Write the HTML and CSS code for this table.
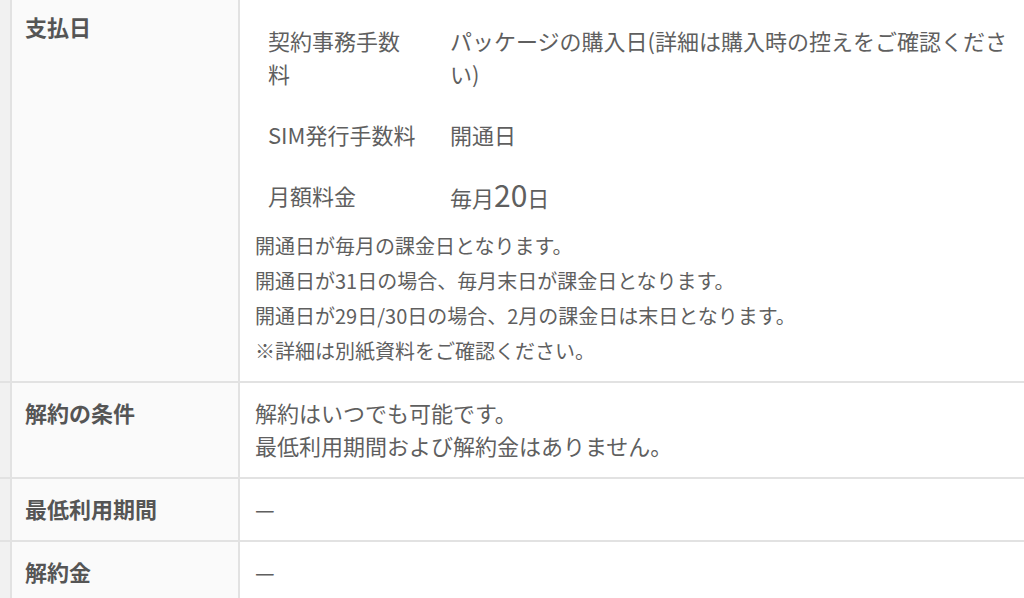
FILE: index.html
```html
<!DOCTYPE html>
<html lang="ja">
<head>
<meta charset="utf-8">
<title>支払日</title>
<link rel="stylesheet" href="styles.css">
</head>
<body>
<div class="spec">
  <div class="row">
    <div class="gutter"></div>
    <div class="th">支払日</div>
    <div class="td td--schedule">
      <div class="fees">
        <div class="fee-label">契約事務手数料</div>
        <div class="fee-value">パッケージの購入日(詳細は購入時の控えをご確認ください)</div>
        <div class="fee-label">SIM発行手数料</div>
        <div class="fee-value">開通日</div>
        <div class="fee-label">月額料金</div>
        <div class="fee-value">毎月<span class="big">20</span>日</div>
      </div>
      <p class="notes">開通日が毎月の課金日となります。<br>開通日が31日の場合、毎月末日が課金日となります。<br>開通日が29日/30日の場合、2月の課金日は末日となります。<br>※詳細は別紙資料をご確認ください。</p>
    </div>
  </div>
  <div class="row">
    <div class="gutter"></div>
    <div class="th">解約の条件</div>
    <div class="td">解約はいつでも可能です。<br>最低利用期間および解約金はありません。</div>
  </div>
  <div class="row">
    <div class="gutter"></div>
    <div class="th">最低利用期間</div>
    <div class="td">—</div>
  </div>
  <div class="row">
    <div class="gutter"></div>
    <div class="th">解約金</div>
    <div class="td">—</div>
  </div>
</div>
</body>
</html>
```

FILE: styles.css
```css
html, body {
  margin: 0;
  padding: 0;
  background: #ffffff;
}
body {
  font-family: "Noto Sans CJK JP", "Noto Sans", sans-serif;
  font-size: 22px;
  line-height: 33px;
  color: #5f5f5f;
  overflow: hidden;
}
.spec {
  margin-top: -3px;
}
.row {
  display: grid;
  grid-template-columns: 12px 228px 1fr;
  border-bottom: 2px solid #e2e2e2;
}
.gutter {
  background: #f1f1f1;
  border-right: 2px solid #e2e2e2;
}
.th {
  background: #fafafa;
  border-right: 2px solid #e2e2e2;
  padding: 13px 13px 15px 13px;
  font-weight: bold;
  color: #555555;
}
.td {
  padding: 13px 10px 15px 15px;
}
.td--schedule {
  padding-bottom: 13px;
}
.fees {
  display: grid;
  grid-template-columns: 195px 1fr;
}
.fee-label {
  padding: 14px 30px 14px 13px;
}
.fee-value {
  padding: 14px 0;
}
.big {
  font-size: 30px;
  line-height: 1;
}
.notes {
  margin: 0;
  font-size: 20px;
  line-height: 35px;
}
```
